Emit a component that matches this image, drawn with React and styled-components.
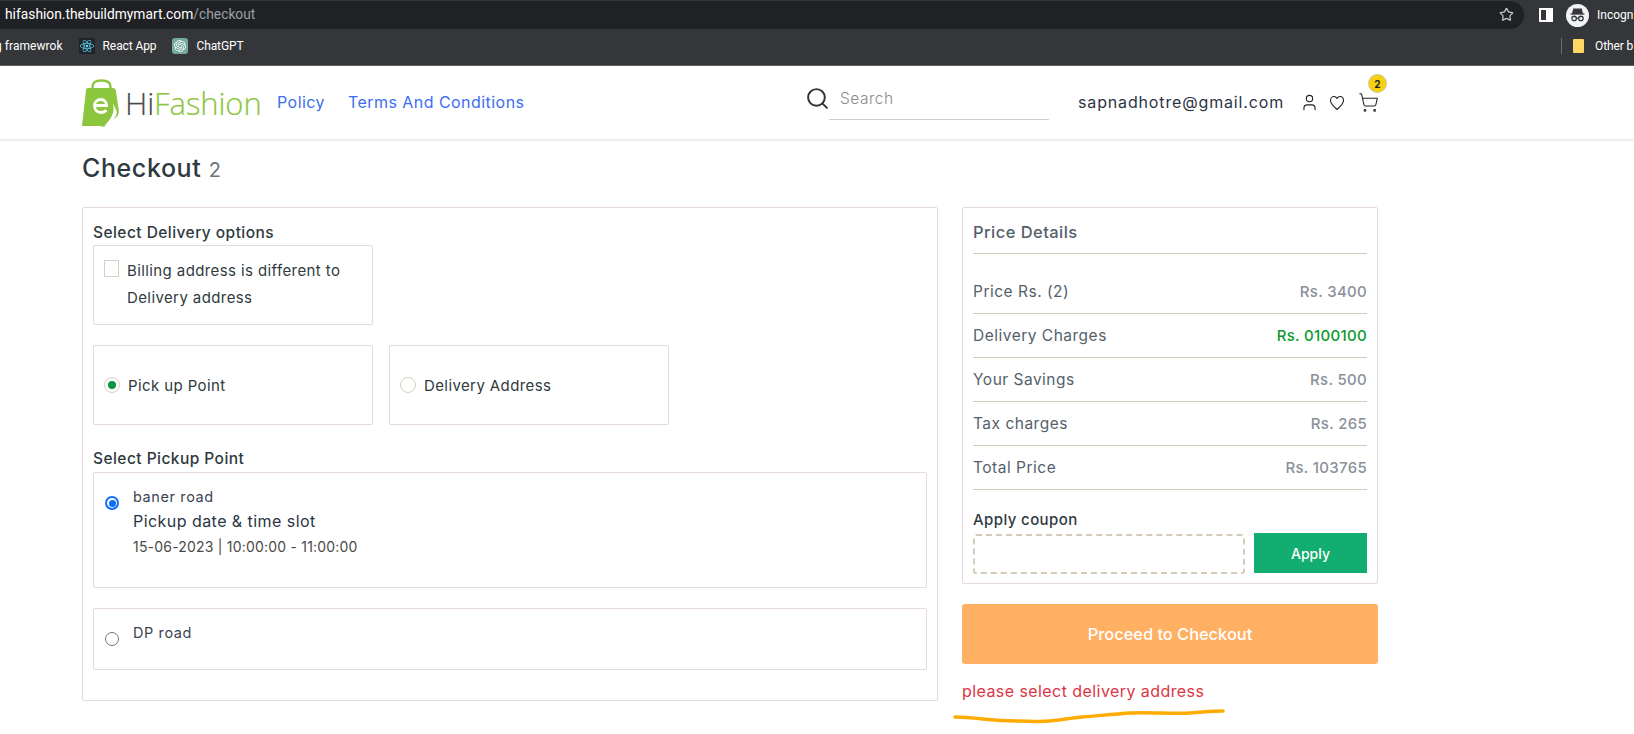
import React from "react";
import styled, { createGlobalStyle } from "styled-components";
import { Search, User, ShoppingCart, Star } from "lucide-react";
import { SiOpenai } from "react-icons/si";
import { FaReact } from "react-icons/fa";

const Global = createGlobalStyle`
  html, body { margin: 0; padding: 0; background: #fff; overflow: hidden; }
  * { box-sizing: border-box; }
  body { font-family: Inter, "Noto Sans", sans-serif; color: #2b3445; }
`;
const Page = styled.div`width: 1634px; height: 734px; position: relative; overflow: hidden;`;
const AddressRow = styled.div`height: 29px; background: #35363a; display: flex; align-items: stretch; padding-top: 1px;`;
const Omnibox = styled.div`
  width: 1524px; background: #202124; border-radius: 0 14px 14px 0; display: flex; align-items: center;
  justify-content: space-between; padding: 0 10px 2px 5px; font: 13.8px Roboto, sans-serif; color: #fff;
`;
const Muted = styled.span`color: #9aa0a6;`;
const ChromeActions = styled.div`display: flex; align-items: center; margin-left: 15px; color: #fff;`;
const SidePanel = styled.span`width: 14px; height: 14px; border: 2px solid #fff; border-right-width: 7px; background: #35363a; display: block;`;
const IncognitoChip = styled.span`display: flex; align-items: center; gap: 8px; margin-left: 13px; font: 12px Roboto, sans-serif; white-space: nowrap;`;
const IncognitoFace = styled.span`width: 23px; height: 23px; border-radius: 50%; background: #f1f3f4; display: flex; align-items: center; justify-content: center;`;
const BookmarkBar = styled.div`
  height: 37px; background: #35363a; border-bottom: 1px solid #5f6368; display: flex; align-items: center;
  font: 12px Roboto, sans-serif; color: #fff; white-space: nowrap; padding-bottom: 2px;
`;
const Bookmark = styled.span`display: flex; align-items: center; gap: 8px; margin-right: 16px; letter-spacing: -.1px;`;
const ClippedBookmark = styled(Bookmark)`margin-left: -5px; margin-right: 16px; letter-spacing: .05px;`;
const ReactTile = styled.span`width: 16px; height: 16px; background: #20232a; color: #61dafb; display: flex; align-items: center; justify-content: center;`;
const GptTile = styled.span`width: 16px; height: 16px; border-radius: 3px; background: #74aa9c; color: #fff; display: flex; align-items: center; justify-content: center;`;
const BarSpacer = styled.span`flex: 1;`;
const BarDivider = styled.span`width: 1px; height: 16px; background: #6b6e73; margin-right: 11px;`;
const Folder = styled.span`width: 11px; height: 14px; flex: none; background: #fdd663; border-radius: 1px; display: block;`;
const OtherMark = styled(Bookmark)`margin-right: 0; width: 61px; gap: 11px;`;

const Header = styled.header`
  height: 73px; background: #fff; box-shadow: 0 1px 3px rgba(0,0,0,.14); display: flex; align-items: center;
  padding: 0 0 0 82px; position: relative;
`;
const Logo = styled.div`display: flex; align-items: center; width: 195px;`;
const LogoWord = styled.span`font: 300 31px "Open Sans", sans-serif; letter-spacing: -.1px; color: #8cc63f; margin-left: 6px; -webkit-text-stroke: .2px currentColor;`;
const LogoDark = styled.span`color: #4a4a4a;`;
const NavGroup = styled.nav`width: 528px; display: flex; gap: 23px; margin-bottom: 2px;`;
const NavLink = styled.a`font-size: 16px; letter-spacing: .45px; color: #3d6df0; white-space: nowrap;`;
const SearchArea = styled.div`display: flex; align-items: flex-start; width: 273px; color: #333;`;
const SearchField = styled.div`
  margin-left: -1px; width: 220px; height: 34px; border-bottom: 1px solid #d5cfc9; padding: 3px 0 0 11px;
  font-size: 15.5px; letter-spacing: .5px; color: #8a8a8a; font-weight: 300;
`;
const Email = styled.span`font-size: 16px; letter-spacing: .85px; color: #2b3445; width: 222px; white-space: nowrap; margin-bottom: 2px;`;
const IconSlot = styled.span`display: flex; width: 29px; color: #222; position: relative;`;
const Badge = styled.span`
  position: absolute; left: 10px; top: -18px; width: 19px; height: 19px; border-radius: 50%; background: #f6d110;
  border: 1px solid #cfc7a0; font-size: 10px; font-weight: 700; color: #1b2430; display: flex; align-items: center; justify-content: center;
`;

const Main = styled.main`padding: 0 0 0 82px; width: 1378px;`;
const Title = styled.h1`margin: 13px 0 22px; height: 33px; font-size: 25px; letter-spacing: .6px; line-height: 33px; font-weight: 500; color: #2f3a40;`;
const Count = styled.span`font-size: 20px; font-weight: 400; color: #6c757d; margin-left: 0;`;
const Columns = styled.div`display: grid; grid-template-columns: 856px 416px; column-gap: 24px; align-items: start;`;
const Panel = styled.section`border: 1px solid #e5d9dd; border-radius: 2px; background: #fff;`;
const DeliveryPanel = styled(Panel)`height: 494px; padding: 13px 10px 0;`;
const SectionLabel = styled.div`font-size: 15.5px; letter-spacing: .45px; line-height: 24px; font-weight: 500; color: #2f3a40;`;
const PickupLabel = styled(SectionLabel)`margin-bottom: 1px;`;
const OptionGrid = styled.div`display: grid; grid-template-columns: 280px 280px; column-gap: 16px; margin: 20px 0 22px;`;
const OptionBox = styled.label`
  width: 280px; height: 80px; border: 1px solid #e5d9dd; border-radius: 2px; display: flex; align-items: ${p => p.$top ? "flex-start" : "center"};
  padding: ${p => p.$top ? "11px" : "0"} 10px 0; font-size: 15px; letter-spacing: .4px; line-height: 27px; color: #2f3a40;
`;
const Box = styled.span`width: 15px; height: 17px; flex: none; margin: 3px 8px 0 0; border: 1px solid #d7cfc2; display: block;`;
const Dot = styled.span`
  width: 16px; height: 16px; flex: none; margin: 0 8px 0 0; border-radius: 50%; border: 1px solid #d7cfc2;
  display: flex; align-items: center; justify-content: center;
  &::after { content: ""; width: 8px; height: 8px; border-radius: 50%; background: ${p => p.$on || "transparent"}; }
`;
const PickupCard = styled.label`
  height: ${p => p.$h}px; margin-bottom: 20px; border: 1px solid #e5d9dd; border-radius: 2px; display: flex; padding: 13px 10px 0;
`;
const NativeRadio = styled.span`
  width: 14px; height: 14px; flex: none; margin: 10px 14px 0 1px; border-radius: 50%;
  border: ${p => p.$on ? "2px solid #0d6efd" : "1px solid #767676"}; padding: 1.5px;
  &::after { content: ""; display: ${p => p.$on ? "block" : "none"}; width: 100%; height: 100%; border-radius: 50%; background: #0d6efd; }
`;
const PickupName = styled.div`font-size: 14.5px; letter-spacing: .6px; line-height: 22px; color: #3b4453;`;
const SlotTitle = styled.div`font-size: 16px; letter-spacing: .45px; line-height: 26px; color: #2b3445;`;
const SlotTime = styled.div`font-size: 14px; letter-spacing: .2px; line-height: 26px; color: #4b4a45;`;

const PriceColumn = styled.div`display: flex; flex-direction: column;`;
const PricePanel = styled(Panel)`height: 377px; padding: 0 10px;`;
const PriceTitle = styled.div`height: 46px; border-bottom: 1px solid #d5cbb9; font-size: 16.5px; letter-spacing: .45px; font-weight: 500; line-height: 48px; color: #555f6b; margin-bottom: 16px;`;
const PriceRow = styled.div`
  height: 44px; border-bottom: 1px solid #d5cbb9; display: flex; justify-content: space-between; align-items: center;
  font-size: 15.5px; letter-spacing: .5px; color: #555f6b;
`;
const Amount = styled.span`font-size: 15px; letter-spacing: .3px; font-weight: 500; color: ${p => p.$c || "#8a9099"};`;
const CouponLabel = styled.div`font-size: 15px; letter-spacing: .4px; font-weight: 500; margin-top: 19px; line-height: 22px; color: #2f3a40;`;
const CouponRow = styled.div`display: flex; justify-content: space-between; margin-top: 3px;`;
const CouponInput = styled.div`width: 272px; height: 40px; border: 2px dashed #d5cbb9; border-radius: 3px;`;
const ApplyButton = styled.button`width: 113px; height: 40px; border: 0; background: #12ad70; color: #fff; font: 500 14px Inter, sans-serif; margin-top: -1px;`;
const ProceedButton = styled.button`
  margin-top: 20px; height: 60px; border: 0; border-radius: 3px; background: #ffb063; color: #fff; font: 500 16.4px Inter, sans-serif;
`;
const ErrorText = styled.div`margin-top: 16px; font-size: 16px; letter-spacing: .43px; line-height: 22px; color: #dc3545;`;
const Scribble = styled.svg`position: absolute; left: 950px; top: 700px;`;

export default function App() {
  return (
    <Page>
      <Global />
      <AddressRow>
        <Omnibox>
          <span>hifashion.thebuildmymart.com<Muted>/checkout</Muted></span>
          <Star size={15} color="#c4c7c5" />
        </Omnibox>
        <ChromeActions>
          <SidePanel />
          <IncognitoChip>
            <IncognitoFace>
              <svg width="17" height="17" viewBox="0 0 16 16" fill="none" stroke="#35363a" strokeWidth="1.2">
                <path d="M4.5 2h7l1 4h-9z" fill="#35363a" />
                <path d="M1.500 6.600h13" />
                <circle cx="4.800" cy="10.800" r="2.100" />
                <circle cx="11.200" cy="10.800" r="2.100" />
                <path d="M6.900 10.600h2.200" />
              </svg>
            </IncognitoFace>
            Incogn
          </IncognitoChip>
        </ChromeActions>
      </AddressRow>
      <BookmarkBar>
        <ClippedBookmark>g framewrok</ClippedBookmark>
        <Bookmark><ReactTile><FaReact size={14} /></ReactTile>React App</Bookmark>
        <Bookmark><GptTile><SiOpenai size={12} /></GptTile>ChatGPT</Bookmark>
        <BarSpacer />
        <BarDivider />
        <OtherMark><Folder />Other b</OtherMark>
      </BookmarkBar>
      <Header>
        <Logo>
          <svg width="37" height="48" viewBox="0 0 37 48">
            <path d="M10.500 14V7.500C10.500 3.500 13.500 1.500 19.500 1.500S28.500 3.500 28.500 7.500V14" fill="none" stroke="#8cc63f" strokeWidth="2.400" />
            <path d="M6 9h25c1.500 0 2.500 1 2.800 2.500L37 33c-1 5-5 8-11 10-1 2-2 3-4 5-2-1-4-1-6-1H0L4 11c.2-1.200 1-2 2-2z" fill="#8cc63f" />
            <path d="M31 24c2 8-1 16-9 23 6-2 12-7 13-14z" fill="#fff" />
            <path d="M13 26.500h11.500c0-3.500-2.200-6-5.700-6S12.500 23 12.500 27s2.800 6.500 6.500 6.500c2.200 0 4-.7 5.500-2.200" fill="none" stroke="#fff" strokeWidth="2.800" />
          </svg>
          <LogoWord><LogoDark>Hi</LogoDark>Fashion</LogoWord>
        </Logo>
        <NavGroup>
          <NavLink>Policy</NavLink>
          <NavLink>Terms And Conditions</NavLink>
        </NavGroup>
        <SearchArea>
          <Search size={25} strokeWidth={1.9} />
          <SearchField>Search</SearchField>
        </SearchArea>
        <Email>sapnadhotre@gmail.com</Email>
        <IconSlot><User size={19} strokeWidth={1.4} /></IconSlot>
        <IconSlot>
          <svg width="16" height="16" viewBox="0 0 16 16" fill="none" stroke="currentColor" strokeWidth="1.100" strokeLinejoin="round">
            <path d="M8 14.500C4 11 1.500 8.500 1.500 5.500 1.500 3 3.200 1.500 5 1.500 6.300 1.500 7.400 2.300 8 3.500 8.600 2.300 9.700 1.500 11 1.500 12.800 1.500 14.500 3 14.500 5.500 14.500 8.500 12 11 8 14.500Z" />
          </svg>
        </IconSlot>
        <IconSlot><ShoppingCart size={21} strokeWidth={1.2} /><Badge>2</Badge></IconSlot>
      </Header>
      <Main>
        <Title>Checkout <Count>2</Count></Title>
        <Columns>
          <DeliveryPanel>
            <SectionLabel>Select Delivery options</SectionLabel>
            <OptionBox $top>
              <Box />
              <span>Billing address is different to<br />Delivery address</span>
            </OptionBox>
            <OptionGrid>
              <OptionBox><Dot $on="#0b9444" />Pick up Point</OptionBox>
              <OptionBox><Dot />Delivery Address</OptionBox>
            </OptionGrid>
            <PickupLabel>Select Pickup Point</PickupLabel>
            <PickupCard $h={116}>
              <NativeRadio $on />
              <div>
                <PickupName>baner road</PickupName>
                <SlotTitle>Pickup date &amp; time slot</SlotTitle>
                <SlotTime>15-06-2023 | 10:00:00 - 11:00:00</SlotTime>
              </div>
            </PickupCard>
            <PickupCard $h={62}>
              <NativeRadio />
              <PickupName>DP road</PickupName>
            </PickupCard>
          </DeliveryPanel>
          <PriceColumn>
            <PricePanel>
              <PriceTitle>Price Details</PriceTitle>
              <PriceRow><span>Price Rs. (2)</span><Amount>Rs. 3400</Amount></PriceRow>
              <PriceRow><span>Delivery Charges</span><Amount $c="#0b9a2c">Rs. 0100100</Amount></PriceRow>
              <PriceRow><span>Your Savings</span><Amount>Rs. 500</Amount></PriceRow>
              <PriceRow><span>Tax charges</span><Amount>Rs. 265</Amount></PriceRow>
              <PriceRow><span>Total Price</span><Amount>Rs. 103765</Amount></PriceRow>
              <CouponLabel>Apply coupon</CouponLabel>
              <CouponRow><CouponInput /><ApplyButton>Apply</ApplyButton></CouponRow>
            </PricePanel>
            <ProceedButton>Proceed to Checkout</ProceedButton>
            <ErrorText>please select delivery address</ErrorText>
          </PriceColumn>
        </Columns>
      </Main>
      <Scribble width="280" height="28" viewBox="0 0 280 28" fill="none">
        <path d="M5 17C14 17 24 18 33 19S55 21 67 21 88 22 100 21 120 18 133 17 165 14 180 13 225 14 240 13 262 11 273 11" stroke="#ffab00" strokeWidth="3.500" strokeLinecap="round" />
      </Scribble>
    </Page>
  );
}
